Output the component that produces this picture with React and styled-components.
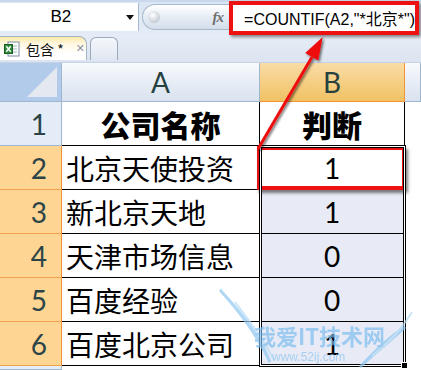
import React from 'react';
import styled, { createGlobalStyle } from 'styled-components';

const GlobalStyle = createGlobalStyle`
  html, body {
    margin: 0;
    padding: 0;
    background: #ffffff;
    overflow: hidden;
  }
  body {
    font-family: "Liberation Sans", "Noto Sans CJK SC", sans-serif;
  }
`;

const CJK = `"Noto Sans CJK SC", "Noto Sans", sans-serif`;
const NUM = `Lato, "Noto Sans CJK SC", sans-serif`;

const rows = [
  { n: 1, name: '公司名称', value: '判断', head: true },
  { n: 2, name: '北京天使投资', value: '1' },
  { n: 3, name: '新北京天地', value: '1' },
  { n: 4, name: '天津市场信息', value: '0' },
  { n: 5, name: '百度经验', value: '0' },
  { n: 6, name: '百度北京公司', value: '1' },
];

export default function App() {
  return (
    <Page>
      <GlobalStyle />
      <FormulaBar>
        <NameBox>
          <span>B2</span>
          <Caret />
        </NameBox>
        <FxPill>
          <Knob />
          <Fx>fx</Fx>
        </FxPill>
        <FormulaInput>=COUNTIF(A2,"*北京*")</FormulaInput>
      </FormulaBar>

      <TabStrip>
        <SheetTab>
          <ExcelIcon viewBox="0 0 16 16">
            <rect x="4" y="1" width="11" height="14" fill="#fff" stroke="#7a8ba3" />
            <line x1="7" y1="5" x2="13" y2="5" stroke="#9bb" />
            <line x1="7" y1="8" x2="13" y2="8" stroke="#9bb" />
            <line x1="7" y1="11" x2="13" y2="11" stroke="#9bb" />
            <rect x="0.5" y="3.5" width="8" height="9" fill="#2f8a3a" stroke="#1d5e25" />
            <path d="M2.3 5.3 L6.7 10.7 M6.7 5.3 L2.3 10.7" stroke="#fff" strokeWidth="1.4" />
          </ExcelIcon>
          <TabLabel>包含 *</TabLabel>
          <TabClose>✕</TabClose>
        </SheetTab>
        <EmptyTab />
      </TabStrip>

      <Sheet>
        <Corner $r={1} $c={1} />
        <ColHead $r={1} $c={2}>A</ColHead>
        <ColHead $r={1} $c={3} $active>B</ColHead>
        <ColHead $r={1} $c={4} />

        {rows.map((r) => (
          <React.Fragment key={r.n}>
            <RowHead $r={r.n + 1} $c={1} $active={r.n > 1}>{r.n}</RowHead>
            <Cell $r={r.n + 1} $c={2} $head={r.head}>{r.name}</Cell>
            <Cell $r={r.n + 1} $c={3} $head={r.head} $center $num={!r.head} $selected={r.n > 2}>
              {r.value}
            </Cell>
            <EmptyCell $r={r.n + 1} $c={4} />
          </React.Fragment>
        ))}

        <RowHead $r={8} $c={1} $active={false} />

        <Selection />
        <Callout />
      </Sheet>

      <Arrow viewBox="0 0 421 370">
        <defs>
          <filter id="sh" x="-20%" y="-20%" width="140%" height="140%">
            <feDropShadow dx="1.5" dy="1.5" stdDeviation="1.2" floodColor="#000" floodOpacity="0.55" />
          </filter>
        </defs>
        <g filter="url(#sh)">
          <line x1="258" y1="149" x2="312" y2="57" stroke="#ee1111" strokeWidth="3" />
          <polygon points="322.7,37 305.2,53 318.2,60.5" fill="#ee1111" />
        </g>
      </Arrow>

      <Watermark>
        <Wings viewBox="0 0 220 90">
          <path d="M20 8 C40 30 55 50 70 80 C60 55 45 35 20 8 Z" fill="none" stroke="#8fc7f0" strokeWidth="3" />
          <path d="M35 20 C50 40 62 55 74 78" fill="none" stroke="#b5dcf6" strokeWidth="2" />
          <path d="M205 45 C190 60 175 70 160 85 C175 70 185 58 205 45 Z" fill="none" stroke="#8fc7f0" strokeWidth="3" />
          <path d="M212 30 C200 50 188 62 172 74" fill="none" stroke="#b5dcf6" strokeWidth="2" />
        </Wings>
        <WmTitle>我爱IT技术网</WmTitle>
        <WmUrl>www.52ij.com</WmUrl>
      </Watermark>
    </Page>
  );
}

const Page = styled.div`
  position: relative;
  width: 421px;
  height: 370px;
  overflow: hidden;
  background: #ffffff;
`;

const FormulaBar = styled.div`
  display: flex;
  align-items: flex-start;
  height: 34px;
  background: linear-gradient(#dbe6f4, #e3ebf6);
  border-top: 2px solid #c9d8ec;
  box-sizing: border-box;
`;

const NameBox = styled.div`
  position: relative;
  display: flex;
  align-items: center;
  justify-content: center;
  width: 140px;
  height: 28px;
  margin-top: 1px;
  padding-right: 16px;
  box-sizing: border-box;
  background: #ffffff;
  border-right: 1px solid #a7b9d0;
  font-family: "Liberation Sans", sans-serif;
  font-size: 17px;
  color: #000;
`;

const Caret = styled.span`
  position: absolute;
  right: 4px;
  top: 12px;
  border-left: 4px solid transparent;
  border-right: 4px solid transparent;
  border-top: 5px solid #111;
`;

const FxPill = styled.div`
  display: flex;
  align-items: center;
  justify-content: space-between;
  width: 88px;
  height: 26px;
  margin: 2px 0 0 3px;
  padding: 0 6px 0 5px;
  box-sizing: border-box;
  border-radius: 13px 0 0 13px;
  border: 1px solid #a8b8cc;
  border-right: none;
  background: linear-gradient(#ffffff, #e4ebf4 55%, #d3ddea);
`;

const Knob = styled.span`
  width: 12px;
  height: 12px;
  border-radius: 50%;
  background: radial-gradient(circle at 40% 35%, #ffffff, #c7cdd6 70%, #9ea8b5);
`;

const Fx = styled.span`
  font-family: "Liberation Serif", serif;
  font-style: italic;
  font-weight: bold;
  font-size: 15px;
  color: #6f6f6f;
  letter-spacing: -1px;
`;

const FormulaInput = styled.div`
  flex: 1;
  height: 34px;
  margin: -1px 2px 0 0;
  padding-left: 11px;
  box-sizing: border-box;
  border: 4px solid #ee1111;
  background: #ffffff;
  box-shadow: 2px 2px 3px rgba(0, 0, 0, 0.45);
  display: flex;
  align-items: center;
  font-family: "Liberation Sans", "Noto Sans CJK SC", sans-serif;
  font-size: 16px;
  color: #000;
  white-space: nowrap;
  z-index: 1;
`;

const TabStrip = styled.div`
  display: flex;
  align-items: flex-end;
  gap: 3px;
  height: 29px;
  padding-bottom: 2px;
  box-sizing: border-box;
  background: linear-gradient(#e6edf6, #dbe4f0);
  border-bottom: 1px solid #c5d3e5;
`;

const SheetTab = styled.div`
  display: flex;
  align-items: center;
  width: 87px;
  height: 24px;
  padding-left: 4px;
  box-sizing: border-box;
  border: 1px solid #a5b3c6;
  border-left: none;
  border-bottom: none;
  border-radius: 0 8px 0 0;
  background: linear-gradient(#fde8a8, #fff7e0 30%, #ffffff 70%);
`;

const ExcelIcon = styled.svg`
  width: 16px;
  height: 16px;
  flex: none;
`;

const TabLabel = styled.span`
  margin-left: 6px;
  font-family: ${CJK};
  font-size: 14px;
  line-height: 1;
  color: #111;
`;

const TabClose = styled.span`
  margin-left: 12px;
  font-family: "DejaVu Sans", sans-serif;
  font-size: 11px;
  font-weight: bold;
  color: #8c96a3;
`;

const EmptyTab = styled.div`
  width: 28px;
  height: 23px;
  box-sizing: border-box;
  border: 1px solid #9ba9bc;
  border-bottom: none;
  border-radius: 6px 6px 0 0;
  background: linear-gradient(#f5f8fc, #dfe7f1);
`;

const Sheet = styled.div`
  display: grid;
  grid-template-columns: 62px 198px 145px 1fr;
  grid-template-rows: 39px repeat(6, 44px) 1fr;
  height: 307px;
`;

const Placed = styled.div`
  grid-row: ${(p) => p.$r};
  grid-column: ${(p) => p.$c};
`;

const Corner = styled(Placed)`
  position: relative;
  background: #b3cbeb;
  border-right: 1px solid #9eb6ce;
  border-bottom: 1px solid #9eb6ce;
  &::after {
    content: '';
    position: absolute;
    right: 4px;
    bottom: 4px;
    border-left: 30px solid transparent;
    border-bottom: 30px solid #e4e9f1;
  }
`;

const ColHead = styled(Placed)`
  display: flex;
  align-items: center;
  justify-content: center;
  box-sizing: border-box;
  background: ${(p) =>
    p.$active
      ? 'linear-gradient(#f9dca6, #f1c264)'
      : 'linear-gradient(#f8fafd, #e4ebf4 60%, #d9e2ee)'};
  border-right: 1px solid ${(p) => (p.$active ? '#f29436' : '#9eb6ce')};
  border-bottom: 1px solid ${(p) => (p.$active ? '#f29436' : '#9eb6ce')};
  font-family: ${NUM};
  font-size: 28px;
  color: #27413e;
`;

const RowHead = styled(Placed)`
  display: flex;
  align-items: center;
  justify-content: flex-end;
  padding-right: 14px;
  box-sizing: border-box;
  background: ${(p) => (p.$active ? '#fed593' : '#e4ecf7')};
  border-right: 1px solid ${(p) => (p.$active ? '#f29436' : '#9eb6ce')};
  border-bottom: 1px solid ${(p) => (p.$active ? '#f0a24c' : '#9eb6ce')};
  font-family: ${NUM};
  font-size: 28px;
  color: #2c4447;
`;

const Cell = styled(Placed)`
  display: flex;
  align-items: center;
  justify-content: ${(p) => (p.$center || p.$head ? 'center' : 'flex-start')};
  padding-left: ${(p) => (p.$center || p.$head ? '0' : '4px')};
  box-sizing: border-box;
  background: ${(p) => (p.$selected ? '#e8ebf5' : '#ffffff')};
  border-right: 1px solid #000;
  border-bottom: 1px solid #000;
  font-family: ${(p) => (p.$num ? NUM : CJK)};
  font-size: ${(p) => (p.$head ? '30px' : '28px')};
  font-weight: ${(p) => (p.$head ? 900 : 400)};
  line-height: 1;
  color: #000;
  white-space: nowrap;
`;

const EmptyCell = styled(Placed)`
  background: #ffffff;
`;

const Selection = styled.div`
  grid-column: 3;
  grid-row: 3 / 8;
  margin: -1px;
  border: 1px solid #000;
  box-shadow: inset 0 0 0 1px #fff, inset 0 0 0 2px #000;
  pointer-events: none;
  position: relative;
  &::after {
    content: '';
    position: absolute;
    right: -3px;
    bottom: -3px;
    width: 5px;
    height: 5px;
    background: #000;
    border: 1px solid #fff;
  }
`;

const Callout = styled.div`
  grid-column: 3;
  grid-row: 3;
  margin: 0 -1px 0 -3px;
  border: 4px solid #ee1111;
  box-shadow: 2px 3px 3px rgba(0, 0, 0, 0.5);
  pointer-events: none;
`;

const Arrow = styled.svg`
  position: absolute;
  left: 0;
  top: 0;
  width: 421px;
  height: 370px;
  pointer-events: none;
`;

const Watermark = styled.div`
  position: absolute;
  left: 200px;
  top: 282px;
  width: 220px;
  height: 90px;
  pointer-events: none;
  opacity: 0.7;
`;

const Wings = styled.svg`
  position: absolute;
  left: 0;
  top: 0;
  width: 220px;
  height: 90px;
`;

const WmTitle = styled.div`
  position: absolute;
  left: 54px;
  top: 42px;
  font-family: ${CJK};
  font-weight: bold;
  font-size: 22px;
  line-height: 1;
  color: #7dbdf0;
`;

const WmUrl = styled.div`
  position: absolute;
  left: 72px;
  top: 68px;
  font-family: "Liberation Sans", sans-serif;
  font-size: 12px;
  color: #8cc4ee;
`;
